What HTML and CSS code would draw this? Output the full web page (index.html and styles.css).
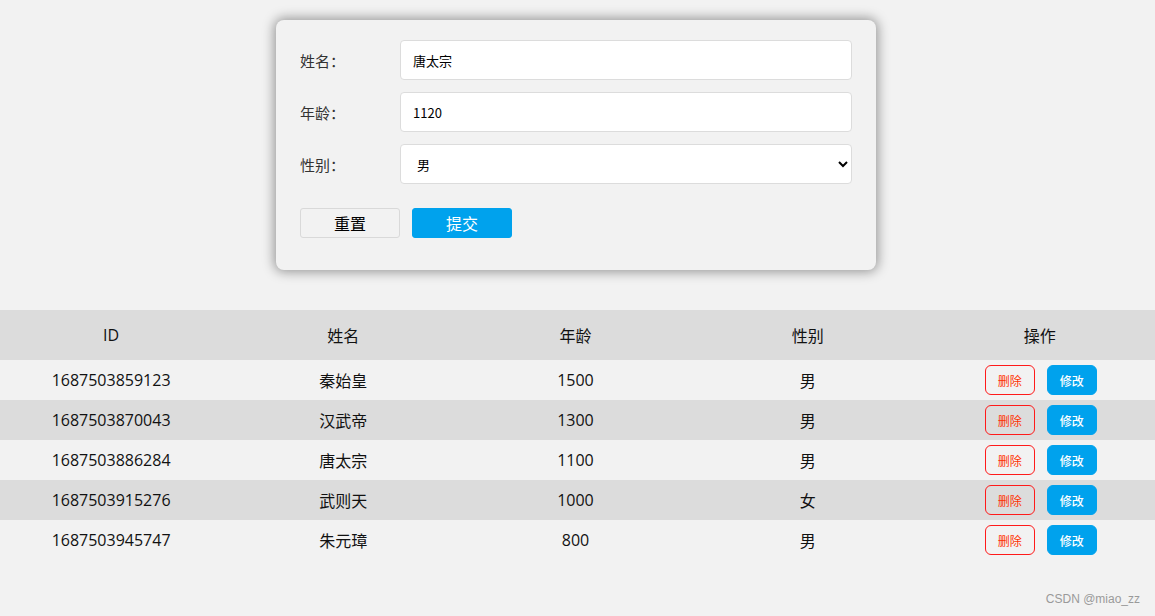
FILE: index.html
```html
<!DOCTYPE html>
<html lang="zh">
<head>
<meta charset="utf-8">
<link rel="stylesheet" href="styles.css">
</head>
<body>
<div class="page">
  <form class="card">
    <div class="row"><label class="label">姓名：</label><input class="field" type="text" value="唐太宗"></div>
    <div class="row"><label class="label">年龄：</label><input class="field" type="text" value="1120"></div>
    <div class="row"><label class="label">性别：</label><select class="field select"><option>男</option><option>女</option></select></div>
    <div class="actions"><button type="button" class="btn btn-reset">重置</button><button type="button" class="btn btn-submit">提交</button></div>
  </form>
  <table class="table">
    <thead><tr><th>ID</th><th>姓名</th><th>年龄</th><th>性别</th><th>操作</th></tr></thead>
    <tbody>
      <tr><td>1687503859123</td><td>秦始皇</td><td>1500</td><td>男</td><td><div class="ops"><button class="op del">删除</button><button class="op edit">修改</button></div></td></tr>
      <tr><td>1687503870043</td><td>汉武帝</td><td>1300</td><td>男</td><td><div class="ops"><button class="op del">删除</button><button class="op edit">修改</button></div></td></tr>
      <tr><td>1687503886284</td><td>唐太宗</td><td>1100</td><td>男</td><td><div class="ops"><button class="op del">删除</button><button class="op edit">修改</button></div></td></tr>
      <tr><td>1687503915276</td><td>武则天</td><td>1000</td><td>女</td><td><div class="ops"><button class="op del">删除</button><button class="op edit">修改</button></div></td></tr>
      <tr><td>1687503945747</td><td>朱元璋</td><td>800</td><td>男</td><td><div class="ops"><button class="op del">删除</button><button class="op edit">修改</button></div></td></tr>
    </tbody>
  </table>
  <div class="mark">CSDN @miao_zz</div>
</div>
</body>
</html>
```

FILE: styles.css
```css
* { box-sizing: border-box; }
html, body { margin: 0; padding: 0; }
body {
  background: #f2f2f2;
  font-family: "Open Sans", "Noto Sans CJK SC", sans-serif;
  color: #222;
  height: 616px;
  overflow: hidden;
}
.page { padding-top: 20px; position: relative; height: 616px; overflow: hidden; }
.card {
  width: 600px;
  margin: 0 0 0 276px;
  background: #f2f2f2;
  border-radius: 8px;
  box-shadow: 0 0 12px 2px rgba(0,0,0,0.38);
  padding: 20px 24px 32px 24px;
  display: flex;
  flex-direction: column;
  gap: 12px;
}
.row { display: flex; align-items: center; height: 40px; }
.label {
  width: 100px;
  font-family: "Noto Sans CJK SC", sans-serif;
  font-size: 15px;
  color: #333;
}
.field {
  flex: 1;
  height: 40px;
  border: 1px solid #dcdcdc;
  border-radius: 4px;
  background: #fff;
  padding: 0 12px;
  font-family: "Noto Sans CJK SC", "Liberation Sans", sans-serif;
  font-size: 13px;
  color: #000;
  outline: none;
}
.select { padding-left: 12px; }
.actions { display: flex; gap: 12px; margin-top: 12px; }
.btn {
  width: 100px;
  height: 30px;
  border-radius: 3px;
  font-family: "Noto Sans CJK SC", sans-serif;
  font-size: 16px;
  padding: 0;
  cursor: pointer;
}
.btn-reset { background: #f2f2f2; border: 1px solid #d9d9d9; color: #000; }
.btn-submit { background: #00a2ed; border: 1px solid #00a2ed; color: #fff; }
.table {
  width: calc(100% + 6px);
  margin: 40px 0 0 -5px;
  border-collapse: collapse;
  table-layout: fixed;
  font-size: 16px;
}
.table th { height: 50px; background: #dcdcdc; font-weight: normal; color: #111; font-family: "Open Sans", "Noto Sans CJK SC", sans-serif; }
.table td { height: 40px; text-align: center; color: #111; padding: 0; }
.table tbody tr:nth-child(even) td { background: #dcdcdc; }
.ops { display: flex; justify-content: center; gap: 12px; padding-left: 2px; }
.op {
  width: 50px;
  height: 30px;
  border-radius: 6px;
  font-size: 12px;
  font-family: "Noto Sans CJK SC", sans-serif;
  padding: 0;
}
.del { background: transparent; border: 1px solid #ff1a1a; color: #ff3300; }
.edit { background: #00a2ed; border: 1px solid #00a2ed; color: #fff; font-weight: 500; }
.mark {
  position: absolute;
  right: 15px;
  top: 592px;
  font-family: "Liberation Sans", sans-serif;
  font-size: 12px;
  color: #9a9a9a;
}
```
